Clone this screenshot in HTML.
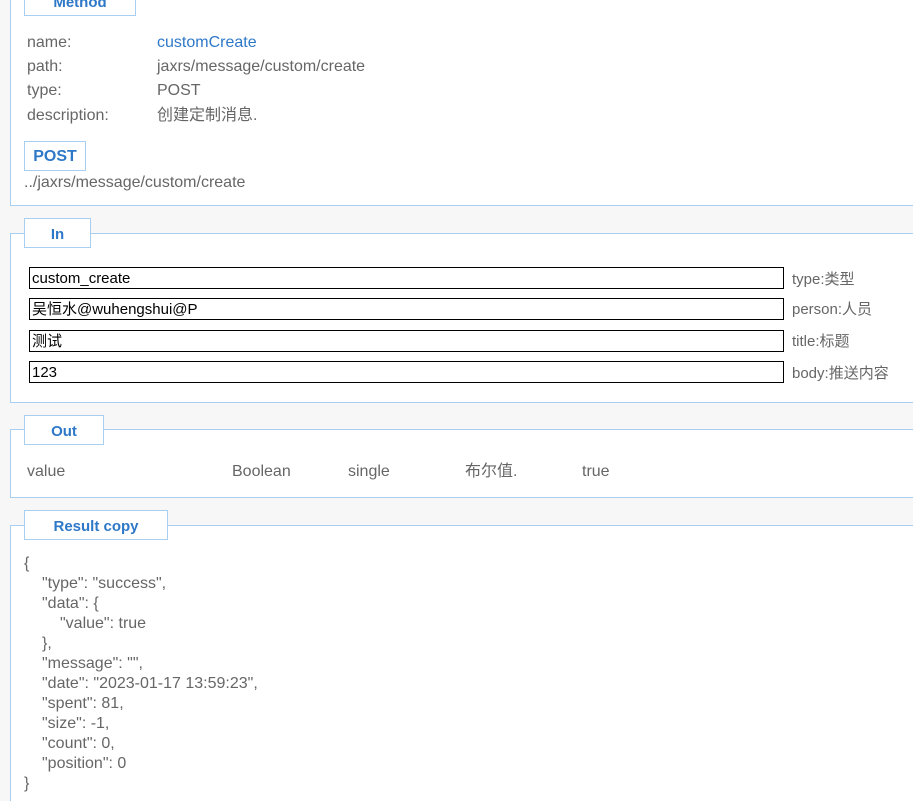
<!DOCTYPE html>
<html><head><meta charset="utf-8"><style>
*{margin:0;padding:0;box-sizing:border-box}
html{width:913px;height:801px;overflow:hidden}
body{width:913px;height:801px;background:#f7f7f7;position:relative;overflow:hidden;font-family:"Liberation Sans","Noto Sans CJK SC",sans-serif;font-size:15px;color:#666}
.p{position:absolute;left:10px;width:920px;background:#fff;border:1px solid #a9cff0}
.lg{position:absolute;left:24px;background:#fff;border:1px solid #a9cff0;color:#2e78c8;font-weight:bold;font-size:15px;text-align:center;line-height:30px;height:30px}
.t{position:absolute;white-space:nowrap;line-height:20px}
.m{font-size:16px}
.in{position:absolute;left:29px;width:755px;height:22px;border:1px solid #000;background:#fff;color:#000;font-size:15px;line-height:22px;padding-left:2px}
.j{position:absolute;left:24px;font-size:16px;line-height:20px;white-space:nowrap}
</style></head><body>
<div class="p" style="top:-2px;height:208px"></div>
<div class="lg" style="top:-14px;width:112px;line-height:32px">Method</div>
<div class="t m" style="left:27px;top:33px">name:</div><div class="t m" style="left:157px;top:33px;color:#2e78c8">customCreate</div>
<div class="t m" style="left:27px;top:57px">path:</div><div class="t m" style="left:157px;top:57px">jaxrs/message/custom/create</div>
<div class="t m" style="left:27px;top:81px">type:</div><div class="t m" style="left:157px;top:81px">POST</div>
<div class="t m" style="left:27px;top:106px">description:</div><div class="t m" style="left:157px;top:106px">创建定制消息.</div>
<div class="lg" style="top:141px;left:24px;width:62px;font-size:16px;line-height:29px">POST</div>
<div class="t m" style="left:24px;top:173px">../jaxrs/message/custom/create</div>

<div class="p" style="top:233px;height:170px"></div>
<div class="lg" style="top:218px;width:67px;line-height:31px">In</div>
<div class="in" style="top:267px">custom_create</div><div class="t" style="left:792px;top:270px">type:类型</div>
<div class="in" style="top:298px">吴恒水@wuhengshui@P</div><div class="t" style="left:792px;top:300px">person:人员</div>
<div class="in" style="top:330px">测试</div><div class="t" style="left:792px;top:332px">title:标题</div>
<div class="in" style="top:361px">123</div><div class="t" style="left:792px;top:364px">body:推送内容</div>

<div class="p" style="top:429px;height:69px"></div>
<div class="lg" style="top:415px;width:80px;line-height:31px">Out</div>
<div class="t m" style="left:27px;top:462px">value</div>
<div class="t m" style="left:232px;top:462px">Boolean</div>
<div class="t m" style="left:348px;top:462px">single</div>
<div class="t m" style="left:465px;top:462px">布尔值.</div>
<div class="t m" style="left:582px;top:462px">true</div>

<div class="p" style="top:525px;height:290px"></div>
<div class="lg" style="top:510px;width:144px;line-height:31px">Result copy</div>
<div class="j" style="top:554px">{</div>
<div class="j" style="top:574px;left:42px">"type": "success",</div>
<div class="j" style="top:594px;left:42px">"data": {</div>
<div class="j" style="top:614px;left:60px">"value": true</div>
<div class="j" style="top:634px;left:42px">},</div>
<div class="j" style="top:654px;left:42px">"message": "",</div>
<div class="j" style="top:674px;left:42px">"date": "2023-01-17 13:59:23",</div>
<div class="j" style="top:694px;left:42px">"spent": 81,</div>
<div class="j" style="top:714px;left:42px">"size": -1,</div>
<div class="j" style="top:734px;left:42px">"count": 0,</div>
<div class="j" style="top:754px;left:42px">"position": 0</div>
<div class="j" style="top:774px">}</div>
</body></html>
